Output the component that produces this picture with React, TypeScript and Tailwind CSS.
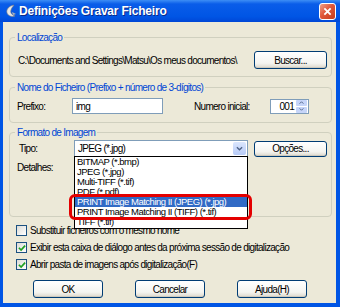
import React from "react";

const items = [
  "BITMAP (*.bmp)",
  "JPEG (*.jpg)",
  "Multi-TIFF (*.tif)",
  "PDF (*.pdf)",
  "PRINT Image Matching II (JPEG) (*.jpg)",
  "PRINT Image Matching II (TIFF) (*.tif)",
  "TIFF (*.tif)",
];

function XpButton({ label, className }: { label: string; className?: string }) {
  return (
    <div
      className={
        "flex items-center justify-center rounded-[3px] border border-[#003C74] bg-[linear-gradient(to_bottom,#ffffff,#f4f4f0_70%,#dcd7cb)] shadow-[inset_0_-1px_0_#cdc9bd] " +
        (className ?? "")
      }
    >
      {label}
    </div>
  );
}

function Check({ checked, label }: { checked?: boolean; label: string }) {
  return (
    <div className="flex items-center h-[17px]">
      <span className="w-[11px] h-[11px] border border-[#1C5180] bg-[linear-gradient(135deg,#dcdcd7,#ffffff)] flex items-center justify-center">
        {checked && (
          <svg viewBox="0 0 9 9" className="w-[8px] h-[8px]">
            <path d="M1 4.2 L3.5 6.8 L8 1.8" stroke="#21A121" strokeWidth="1.9" fill="none" />
          </svg>
        )}
      </span>
      <span className="ml-[3px]">{label}</span>
    </div>
  );
}

function Group({ title, children, className }: { title: string; children: React.ReactNode; className?: string }) {
  return (
    <fieldset className={"ml-[6px] mr-[4px] border border-[#D0D0BF] rounded-[4px] " + (className ?? "")}>
      <legend className="ml-[5px] px-[2px] text-[#0046D5] leading-[13px]">{title}</legend>
      {children}
    </fieldset>
  );
}

export default function App() {
  return (
    <div className="w-[340px] h-[307px] flex flex-col bg-[#0055E5] pb-[4px] font-['Liberation_Sans',Arial,sans-serif] text-[10px] tracking-[-0.7px] text-black whitespace-nowrap overflow-hidden">
      {/* title bar */}
      <div className="h-[22px] flex items-center pl-[5px] pr-[4px] bg-[linear-gradient(to_bottom,#3d8ef5,#0a5de9_18%,#0055e5_75%,#0047d6)]">
        <svg viewBox="0 0 12 14" className="w-[12px] h-[14px]">
          <path d="M9 1 C4 2 1 5 2 9 C3 12 7 13 10 12 C7 11 5 9 6 6 C6.5 4 8 2.5 9 1 Z" fill="#e8e8e8" stroke="#7a7a7a" strokeWidth="0.6" />
          <path d="M7 8 L11 10 L8 11 Z" fill="#b0b0b0" />
        </svg>
        <span className="ml-[2px] text-white font-bold text-[12px] tracking-[-0.2px] [text-shadow:1px_1px_0_#0a2a8a]">Definições Gravar Ficheiro</span>
        <div className="ml-auto w-[17px] h-[17px] rounded-[3px] border border-white bg-[linear-gradient(135deg,#f0a088,#e0583a_45%,#c43c1c)] flex items-center justify-center">
          <svg viewBox="0 0 10 10" className="w-[9px] h-[9px]">
            <path d="M1.5 1.5 L8.5 8.5 M8.5 1.5 L1.5 8.5" stroke="white" strokeWidth="2" />
          </svg>
        </div>
      </div>

      {/* body */}
      <div className="flex-1 ml-[3px] mr-[4px] bg-[#ECE9D8] flex flex-col">
        <Group title="Localização" className="mt-[9px]">
          <div className="flex items-center justify-between pl-[8px] pr-[4px] mt-[7px] mb-[7px] h-[18px]">
            <span>C:\Documents and Settings\Matsu\Os meus documentos\</span>
            <XpButton label="Buscar..." className="w-[73px] h-[18px]" />
          </div>
        </Group>

        <Group title="Nome do Ficheiro (Prefixo + número de 3-dígitos)" className="mt-[4px]">
          <div className="flex items-center pl-[7px] mt-[4px] mb-[8px] h-[16px]">
            <span className="w-[55px]">Prefixo:</span>
            <div className="w-[91px] h-[16px] border border-[#7F9DB9] bg-white flex items-center pl-[3px]">img</div>
            <span className="ml-[31px] w-[76px]">Numero inicial:</span>
            <div className="w-[39px] h-[15px] border border-[#7F9DB9] bg-white flex items-center">
              <span className="flex-1 text-right pr-[2px]">001</span>
              <div className="w-[11px] h-[13px] flex flex-col gap-[1px] mr-[1px]">
                <div className="flex-1 rounded-[1px] bg-[#C6D5F9] flex items-center justify-center">
                  <svg viewBox="0 0 6 4" className="w-[5px] h-[3px]"><path d="M0.5 3.5 L3 1 L5.5 3.5" stroke="#4D6185" strokeWidth="1.2" fill="none" /></svg>
                </div>
                <div className="flex-1 rounded-[1px] bg-[#C6D5F9] flex items-center justify-center">
                  <svg viewBox="0 0 6 4" className="w-[5px] h-[3px]"><path d="M0.5 0.5 L3 3 L5.5 0.5" stroke="#4D6185" strokeWidth="1.2" fill="none" /></svg>
                </div>
              </div>
            </div>
          </div>
        </Group>

        <Group title="Formato de Imagem" className="mt-[3px]">
          <div className="flex items-center pl-[9px] mt-[1px] h-[17px]">
            <span className="w-[55px]">Tipo:</span>
            <div className="relative w-[174px] h-[17px] border border-[#7F9DB9] bg-white flex items-center">
              <span className="flex-1 pl-[3px]">JPEG (*.jpg)</span>
              <div className="w-[13px] h-[13px] mr-[1px] rounded-[2px] bg-[linear-gradient(to_bottom,#dbe6fd,#b7cbf7)] flex items-center justify-center">
                <svg viewBox="0 0 8 5" className="w-[7px] h-[5px]"><path d="M1 1 L4 4 L7 1" stroke="#4D6185" strokeWidth="1.5" fill="none" /></svg>
              </div>
              <div className="absolute left-[-1px] top-full w-[174px] z-10 border border-black bg-white pb-[1px] text-[9.5px] tracking-[-0.5px]">
                {items.map((t, i) => (
                  <div
                    key={t}
                    className={
                      "h-[10px] leading-[10px] pl-[2px] " +
                      (i === 4 ? "bg-[#316AC5] text-white" : "")
                    }
                  >
                    {t}
                  </div>
                ))}
                <div className="absolute left-[-6px] top-[37px] w-[183px] h-[26px] border-[3px] border-[#E40000] rounded-[6px]" />
              </div>
            </div>
            <XpButton label="Opções..." className="ml-[6px] w-[73px] h-[16px]" />
          </div>
          <div className="flex items-center pl-[7px] mt-[4px] mb-[42px] h-[13px]">
            <span>Detalhes:</span>
          </div>
        </Group>

        <div className="pl-[13px] mt-[5px]">
          <Check label="Substituir ficheiros com o mesmo nome" />
          <Check checked label="Exibir esta caixa de diálogo antes da próxima sessão de digitalização" />
          <Check checked label="Abrir pasta de imagens após digitalização(F)" />
        </div>

        <div className="flex pl-[30px] gap-[32px] mt-[7px]">
          <XpButton label="OK" className="w-[70px] h-[18px]" />
          <XpButton label="Cancelar" className="w-[70px] h-[18px]" />
          <XpButton label="Ajuda(H)" className="w-[70px] h-[18px]" />
        </div>
      </div>
    </div>
  );
}
